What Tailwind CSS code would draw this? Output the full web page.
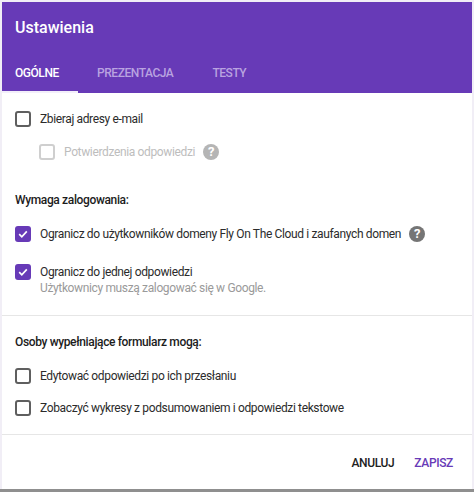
<!DOCTYPE html>
<html lang="pl">
<head>
  <meta charset="UTF-8">
  <title>Ustawienia</title>
  <script src="https://cdn.jsdelivr.net/npm/@tailwindcss/browser@4"></script>
</head>
<body class="w-[474px] h-[492px] overflow-hidden bg-[#8f8f8f] font-['Roboto',sans-serif]">
  <div class="h-[489px] flex flex-col bg-[#f1eef6] pt-[2px] pl-[2px] pr-[2px]">
    <!-- header -->
    <div class="h-[91px] shrink-0 bg-[#673ab7] flex flex-col">
      <h1 class="h-[52px] pl-[13px] pt-[15px] text-[16px] leading-[22px] font-medium text-white">Ustawienia</h1>
      <div class="flex h-[39px] text-[12px] tracking-[-0.45px] font-medium">
        <div class="w-[76px] h-[39px] pl-[13px] pt-[10px] leading-[18px] text-white border-b-2 border-[#f3effa]">OGÓLNE</div>
        <div class="ml-[19px] pt-[10px] leading-[18px] text-[#b9a3e0]">PREZENTACJA</div>
        <div class="ml-[39px] pt-[10px] leading-[18px] text-[#b9a3e0]">TESTY</div>
      </div>
    </div>

    <div class="flex-1 bg-white flex flex-col text-[12px] tracking-[-0.36px] text-[#2b2b2b]">
      <!-- zbieraj -->
      <div class="h-[223px] shrink-0 pl-[13px] border-b border-[#e6e6e6]">
        <div class="flex items-center gap-[9px] mt-[17px] h-[18px]">
          <span class="w-4 h-4 rounded-[3px] border-2 border-[#5f5f5f]"></span>
          <span>Zbieraj adresy e-mail</span>
        </div>
        <div class="flex items-center gap-[9px] mt-[15px] h-[18px] pl-[24px] text-[#bdbdbd]">
          <span class="w-4 h-4 rounded-[3px] border-2 border-[#cfcfcf]"></span>
          <span>Potwierdzenia odpowiedzi</span>
          <span class="w-4 h-4 -ml-[1px] rounded-full bg-[#b5b5b5] text-white text-[13px] font-bold leading-4 text-center">?</span>
        </div>

        <div class="mt-[30px] h-[18px] leading-[18px] font-medium text-[#1c1c1c]">Wymaga zalogowania:</div>

        <div class="flex items-center gap-[9px] mt-[16px] h-[18px]">
          <span class="w-4 h-4 rounded-[3px] bg-[#673ab7] flex items-center justify-center">
            <svg class="w-3 h-3" viewBox="0 0 12 12" fill="none" stroke="#fff" stroke-width="1.7"><path d="M2.2 6.2l2.6 2.6 5-5.4"/></svg>
          </span>
          <span>Ogranicz do użytkowników domeny Fly On The Cloud i zaufanych domen</span>
          <span class="w-4 h-4 -ml-[1px] rounded-full bg-[#757575] text-white text-[13px] font-bold leading-4 text-center">?</span>
        </div>

        <div class="flex gap-[9px] mt-[21px]">
          <span class="w-4 h-4 rounded-[3px] bg-[#673ab7] flex items-center justify-center">
            <svg class="w-3 h-3" viewBox="0 0 12 12" fill="none" stroke="#fff" stroke-width="1.7"><path d="M2.2 6.2l2.6 2.6 5-5.4"/></svg>
          </span>
          <div class="leading-[16px]">
            <div>Ogranicz do jednej odpowiedzi</div>
            <div class="text-[#9a9a9a]">Użytkownicy muszą zalogować się w Google.</div>
          </div>
        </div>
      </div>

      <!-- osoby -->
      <div class="h-[119px] shrink-0 pl-[13px] border-b border-[#e6e6e6]">
        <div class="mt-[17px] h-[18px] leading-[18px] font-medium text-[#1c1c1c]">Osoby wypełniające formularz mogą:</div>
        <div class="flex items-center gap-[9px] mt-[16px] h-[18px]">
          <span class="w-4 h-4 rounded-[3px] border-2 border-[#5f5f5f]"></span>
          <span>Edytować odpowiedzi po ich przesłaniu</span>
        </div>
        <div class="flex items-center gap-[9px] mt-[14px] h-[18px]">
          <span class="w-4 h-4 rounded-[3px] border-2 border-[#5f5f5f]"></span>
          <span>Zobaczyć wykresy z podsumowaniem i odpowiedzi tekstowe</span>
        </div>
      </div>

      <!-- actions -->
      <div class="flex-1 flex justify-end items-center gap-[20px] pr-[19px] pt-[1px] text-[12px] font-medium">
        <button class="text-[#212121]">ANULUJ</button>
        <button class="text-[#673ab7]">ZAPISZ</button>
      </div>
    </div>
  </div>
</body>
</html>
